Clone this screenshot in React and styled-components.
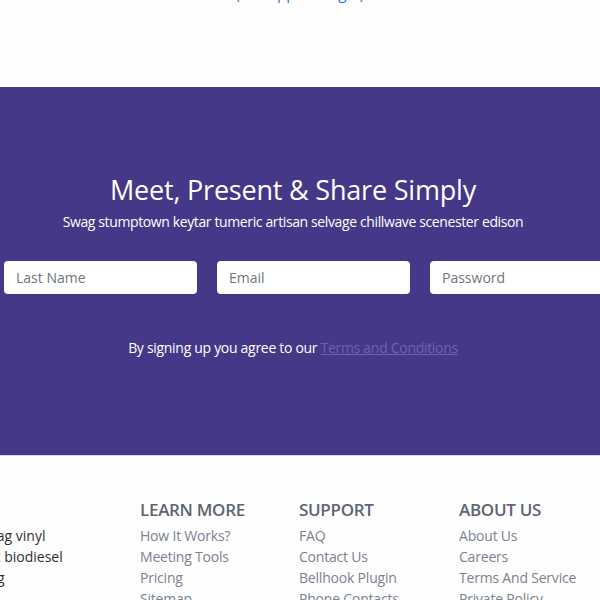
import React from "react";
import styled, { createGlobalStyle } from "styled-components";

const Global = createGlobalStyle`
  html, body { margin: 0; padding: 0; background: #fefefe; overflow: hidden; }
  body { font-family: "Open Sans", "Noto Sans", sans-serif; }
`;

const Page = styled.div`
  width: 600px;
  height: 600px;
  overflow: hidden;
`;

const TopArea = styled.div`
  height: 87px;
  overflow: hidden;
  background: #fefefe;
`;

const TopLine = styled.p`
  margin: -17px 0 0;
  padding-left: 13px;
  font-size: 15px;
  line-height: 20px;
  color: #5b5f97;
  white-space: nowrap;
`;

const TopLink = styled.span`
  color: #1f7ae0;
`;

const Hero = styled.section`
  background: #453889;
  height: 368px;
  border-bottom: 1px solid #d8d6e4;
  overflow: hidden;
`;

const HeroInner = styled.div`
  width: 586px;
  padding-top: 85px;
  display: flex;
  flex-direction: column;
  align-items: center;
`;

const Title = styled.h1`
  margin: 0;
  font-size: 27px;
  font-weight: 400;
  line-height: 36px;
  color: #ffffff;
  letter-spacing: -0.2px;
`;

const Subtitle = styled.p`
  margin: 4px 0 0;
  font-size: 14px;
  line-height: 20px;
  color: #ffffff;
  letter-spacing: -0.38px;
  white-space: nowrap;
`;

const InputRow = styled.div`
  align-self: stretch;
  display: flex;
  gap: 20px;
  padding-left: 4px;
  margin-top: 29px;
`;

const Field = styled.input`
  flex: 0 0 193px;
  width: 193px;
  min-width: 0;
  box-sizing: border-box;
  height: 33px;
  border: none;
  border-radius: 4px;
  background: #ffffff;
  padding: 0 12px;
  font-family: "Open Sans", "Noto Sans", sans-serif;
  font-size: 14px;
  outline: none;
  &::placeholder { color: #6f7480; }
`;

const Agree = styled.p`
  margin: 44px 0 0;
  font-size: 14px;
  line-height: 20px;
  color: #ffffff;
  letter-spacing: -0.3px;
  white-space: nowrap;
`;

const TermsLink = styled.a`
  color: #6e62b4;
  text-decoration: underline;
`;

const Footer = styled.footer`
  display: grid;
  grid-template-columns: 200px 159px 160px 160px;
  margin-left: -60px;
  padding-top: 42px;
`;

const AboutText = styled.div`
  padding-top: 27px;
  font-size: 14px;
  line-height: 21px;
  color: #2f2f33;
  white-space: nowrap;
`;

const Column = styled.div`
  display: flex;
  flex-direction: column;
`;

const ColTitle = styled.h4`
  margin: 0 0 3px;
  font-size: 17px;
  font-weight: 600;
  line-height: 24px;
  color: #5c6475;
  letter-spacing: -0.3px;
`;

const ColLink = styled.a`
  font-size: 14px;
  line-height: 21px;
  color: #7b8291;
  text-decoration: none;
  letter-spacing: -0.2px;
`;

const columns = [
  { title: "LEARN MORE", links: ["How It Works?", "Meeting Tools", "Pricing", "Sitemap"] },
  { title: "SUPPORT", links: ["FAQ", "Contact Us", "Bellhook Plugin", "Phone Contacts"] },
  { title: "ABOUT US", links: ["About Us", "Careers", "Terms And Service", "Private Policy"] },
];

export default function App() {
  return (
    <Page>
      <Global />
      <TopArea>
        <TopLine>
          Need more info? Read the docs (<TopLink>See apps or login</TopLink>)
        </TopLine>
      </TopArea>
      <Hero>
        <HeroInner>
          <Title>Meet, Present &amp; Share Simply</Title>
          <Subtitle>Swag stumptown keytar tumeric artisan selvage chillwave scenester edison</Subtitle>
          <InputRow>
            <Field placeholder="Last Name" />
            <Field placeholder="Email" />
            <Field placeholder="Password" type="password" />
          </InputRow>
          <Agree>
            By signing up you agree to our <TermsLink href="#">Terms and Conditions</TermsLink>
          </Agree>
        </HeroInner>
      </Hero>
      <Footer>
        <AboutText>
          Totes swag vinyl
          <br />
          Art direct biodiesel
          <br />
          It hashtag
        </AboutText>
        {columns.map((c) => (
          <Column key={c.title}>
            <ColTitle>{c.title}</ColTitle>
            {c.links.map((l) => (
              <ColLink key={l} href="#">{l}</ColLink>
            ))}
          </Column>
        ))}
      </Footer>
    </Page>
  );
}
